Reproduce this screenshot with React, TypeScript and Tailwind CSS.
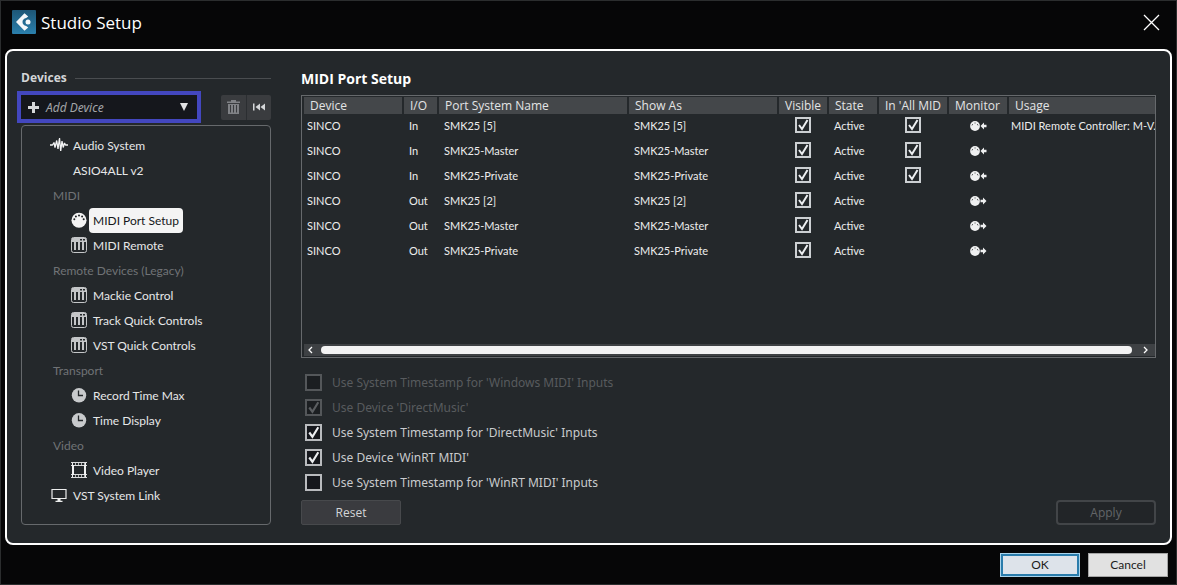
import React, { useState } from 'react';
import clsx from 'clsx';

type IconName = 'audio' | 'midi' | 'remote' | 'clock' | 'film' | 'screen';

interface TreeItem {
  label: string;
  kind: 'root' | 'group' | 'child';
  icon?: IconName;
}

interface Port {
  io: 'In' | 'Out';
  name: string;
  usage?: string;
}

interface Option {
  id: string;
  label: string;
  checked: boolean;
  disabled?: boolean;
}

const TREE: TreeItem[] = [
  { label: 'Audio System', kind: 'root', icon: 'audio' },
  { label: 'ASIO4ALL v2', kind: 'root' },
  { label: 'MIDI', kind: 'group' },
  { label: 'MIDI Port Setup', kind: 'child', icon: 'midi' },
  { label: 'MIDI Remote', kind: 'child', icon: 'remote' },
  { label: 'Remote Devices (Legacy)', kind: 'group' },
  { label: 'Mackie Control', kind: 'child', icon: 'remote' },
  { label: 'Track Quick Controls', kind: 'child', icon: 'remote' },
  { label: 'VST Quick Controls', kind: 'child', icon: 'remote' },
  { label: 'Transport', kind: 'group' },
  { label: 'Record Time Max', kind: 'child', icon: 'clock' },
  { label: 'Time Display', kind: 'child', icon: 'clock' },
  { label: 'Video', kind: 'group' },
  { label: 'Video Player', kind: 'child', icon: 'film' },
  { label: 'VST System Link', kind: 'root', icon: 'screen' },
];

const PORTS: Port[] = [
  { io: 'In', name: 'SMK25 [5]', usage: 'MIDI Remote Controller: M-V.' },
  { io: 'In', name: 'SMK25-Master' },
  { io: 'In', name: 'SMK25-Private' },
  { io: 'Out', name: 'SMK25 [2]' },
  { io: 'Out', name: 'SMK25-Master' },
  { io: 'Out', name: 'SMK25-Private' },
];

const COLUMNS = [
  { label: 'Device', width: 'w-[100px]' },
  { label: 'I/O', width: 'w-[35px]' },
  { label: 'Port System Name', width: 'w-[190px]' },
  { label: 'Show As', width: 'w-[150px]' },
  { label: 'Visible', width: 'w-[50px]' },
  { label: 'State', width: 'w-[50px]' },
  { label: "In 'All MID", width: 'w-[70px]' },
  { label: 'Monitor', width: 'w-[60px]' },
  { label: 'Usage', width: '' },
];

const OPTIONS: Option[] = [
  { id: 'ts-windows', label: "Use System Timestamp for 'Windows MIDI' Inputs", checked: false, disabled: true },
  { id: 'use-dm', label: "Use Device 'DirectMusic'", checked: true, disabled: true },
  { id: 'ts-dm', label: "Use System Timestamp for 'DirectMusic' Inputs", checked: true },
  { id: 'use-winrt', label: "Use Device 'WinRT MIDI'", checked: true },
  { id: 'ts-winrt', label: "Use System Timestamp for 'WinRT MIDI' Inputs", checked: false },
];

const TreeIcon: React.FC<{ name: IconName }> = ({ name }) => {
  switch (name) {
    case 'audio':
      return (
        <svg width="18" height="16" viewBox="0 0 18 16" className="shrink-0" fill="none" stroke="#f2f3f4" strokeWidth="1.300" aria-hidden="true">
          <path d="M0 8h2.500L4 5.500 5 10.500 6.700 3.500 8 12 9.500 1l1.200 13L12 4l1.200 6.500L14.500 6l1 2H18" strokeLinejoin="bevel" />
        </svg>
      );
    case 'midi':
      return (
        <svg width="16" height="16" viewBox="0 0 16 16" className="shrink-0" aria-hidden="true">
          <circle cx="8" cy="8.300" r="7.500" fill="#f4f4f4" />
          <g fill="#1d2023">
            <circle cx="3.300" cy="7.300" r="1" />
            <circle cx="4.900" cy="4.600" r="1" />
            <circle cx="8" cy="3.400" r="1" />
            <circle cx="11.100" cy="4.600" r="1" />
            <circle cx="12.700" cy="7.300" r="1" />
          </g>
        </svg>
      );
    case 'remote':
      return (
        <svg width="16" height="16" viewBox="0 0 16 16" className="shrink-0" aria-hidden="true">
          <rect x="0.500" y="0.500" width="15" height="15" rx="2" fill="none" stroke="#c4c6c8" />
          <path d="M1 1h14v4H1z" fill="#c4c6c8" />
          <path d="M9 2h2v1.500H9zM12 2h2v1.500h-2z" fill="#24282b" />
          <path d="M3 5h2v8H3zM7 5h2v8H7zM11 5h2v8h-2z" fill="#c4c6c8" />
        </svg>
      );
    case 'clock':
      return (
        <svg width="16" height="16" viewBox="0 0 16 16" className="shrink-0" aria-hidden="true">
          <circle cx="8" cy="8.300" r="7.200" fill="#c8cacc" />
          <path d="M7.500 3.500v5H12" fill="none" stroke="#24282b" strokeWidth="1.300" />
        </svg>
      );
    case 'film':
      return (
        <svg width="16" height="16" viewBox="0 0 16 16" className="shrink-0" fill="none" stroke="#f0f1f2" aria-hidden="true">
          <path d="M1.500 1v14M14.500 1v14M2.500 3v10M13.500 3v10" />
          <path d="M0 .5h16M0 3.500h16M0 12.500h16M0 15.500h16" strokeWidth="0.900" />
          <path d="M1 2h15M1 14h15" strokeWidth="2" strokeDasharray="1 2" strokeOpacity="0.700" />
        </svg>
      );
    case 'screen':
      return (
        <svg width="16" height="16" viewBox="0 0 16 16" className="shrink-0" aria-hidden="true">
          <path d="M1 2.500h14v9H1z" fill="none" stroke="#eceded" strokeWidth="1.200" />
          <path d="M6.500 12h3v1.700h2V15h-7v-1.300h2z" fill="#eceded" />
        </svg>
      );
  }
};

/** Small DIN socket with an arrow pointing in or out of it */
const MonitorIcon: React.FC<{ io: 'In' | 'Out' }> = ({ io }) => (
  <svg width="17" height="10" viewBox="0 0 17 10" aria-hidden="true">
    <circle cx="5" cy="5" r="4.900" fill="#eff0f1" />
    <path d="M2 4.400l.7-1.300M4.500 2h1.100M7.300 3.100l.7 1.300" stroke="#24282b" strokeWidth="0.800" />
    {io === 'In' ? (
      <path d="M10.500 5L14 1.500v2.300h2.500v2.400H14v2.300z" fill="#eff0f1" />
    ) : (
      <path d="M16.500 5L13 1.500v2.300h-2.500v2.400H13v2.300z" fill="#eff0f1" />
    )}
  </svg>
);

interface CheckBoxProps {
  id?: string;
  label?: string;
  defaultChecked: boolean;
  disabled?: boolean;
  large?: boolean;
}

const CheckBox: React.FC<CheckBoxProps> = ({ id, label, defaultChecked, disabled, large }) => {
  const [checked, setChecked] = useState(defaultChecked);

  return (
    <span className={clsx('grid shrink-0', large ? 'size-[17px]' : 'size-4')}>
      <input
        id={id}
        type="checkbox"
        checked={checked}
        disabled={disabled}
        aria-label={label}
        onChange={e => setChecked(e.target.checked)}
        className={clsx(
          'col-start-1 row-start-1 size-full appearance-none border-2',
          disabled ? 'border-[#54575a]' : large ? 'border-[#b9bbbe]' : 'border-[#cdd0d3]',
          large && !disabled && 'bg-[#15171c]',
          large && disabled && 'bg-[#1b1e21]'
        )}
      />
      {checked && (
        <svg
          viewBox="0 0 16 16"
          className={clsx('pointer-events-none col-start-1 row-start-1 size-full', disabled ? 'text-[#5b5e61]' : 'text-[#eceef0]')}
          fill="none"
          stroke="currentColor"
          strokeWidth="2"
          aria-hidden="true"
        >
          <path d="M4 8l3 4 5.500-9" />
        </svg>
      )}
    </span>
  );
};

const TitleBar: React.FC = () => (
  <header className="flex h-12 items-center justify-between pr-4 pb-1.5 pl-[11px]">
    <div className="flex items-center gap-[5px]">
      <svg width="24" height="24" viewBox="0 0 24 24" aria-hidden="true">
        <defs>
          <linearGradient id="logo-bg" x1="0" y1="0" x2="0" y2="1">
            <stop offset="0" stopColor="#1d5676" />
            <stop offset="1" stopColor="#2b80ad" />
          </linearGradient>
        </defs>
        <rect width="24" height="24" rx="1" fill="url(#logo-bg)" />
        <path d="M4 12l8.500-8.800 3.700 3.400-2 1.400c-2.400.6-3.700 2-3.700 4s1.300 3.400 3.700 4l2 1.400-3.700 3.400z" fill="#f5f8fa" />
        <circle cx="16" cy="12" r="2.500" fill="#f5f8fa" />
      </svg>
      <h1 className="pt-0.5 text-[17px] text-white">Studio Setup</h1>
    </div>
    <button type="button" aria-label="Close" className="text-white">
      <svg width="17" height="17" viewBox="0 0 17 17" stroke="currentColor" strokeWidth="1.300" aria-hidden="true">
        <path d="M1 1l15 15M16 1L1 16" />
      </svg>
    </button>
  </header>
);

const DevicePanel: React.FC = () => {
  const [selected, setSelected] = useState('MIDI Port Setup');

  return (
    <aside className="flex w-[250px] shrink-0 flex-col">
      <div className="flex h-5 items-center gap-2 pt-0.5">
        <h2 className="text-xs font-bold text-[#d3d5d7]">Devices</h2>
        <div className="h-px flex-1 bg-[#4a4d50]" />
      </div>

      <div className="-ml-1 flex items-center justify-between pt-1">
        <button
          type="button"
          aria-haspopup="menu"
          className="flex h-8 w-[184px] items-center border-4 border-[#4347bf] bg-[#15171c] pr-[9px] pl-[7px] text-xs text-[#a3a5a8]"
        >
          <svg width="11" height="11" viewBox="0 0 11 11" fill="#d5d7d9" aria-hidden="true">
            <path d="M4 0h3v4h4v3H7v4H4V7H0V4h4z" />
          </svg>
          <span className="flex-1 pt-0.5 pl-[7px] text-left font-['Noto_Sans',sans-serif] italic">Add Device</span>
          <svg width="8" height="8" viewBox="0 0 8 8" fill="#e2e3e4" aria-hidden="true">
            <path d="M0 0h8L4 8z" />
          </svg>
        </button>
        <div className="flex h-[25px] w-[50px] rounded-xs bg-[#3a3c3f]">
          <button type="button" aria-label="Remove device" className="flex flex-1 items-center justify-center border-r border-[#2b2e31]">
            <svg width="13" height="14" viewBox="0 0 13 14" fill="#808286" aria-hidden="true">
              <path d="M4 0h5v1.500h4V3H0V1.500h4zM1 4h11v10H1zM3 5v7.500h1V5zm3 0v7.500h1V5zm3 0v7.500h1V5z" fillRule="evenodd" />
            </svg>
          </button>
          <button type="button" aria-label="Reset devices" className="flex flex-1 items-center justify-center">
            <svg width="12" height="8" viewBox="0 0 12 8" fill="#d5d7d9" aria-hidden="true">
              <path d="M0 0.500h1.500v7H0zM7 0.500v7L2.500 4zM12 0.500v7L7.500 4z" />
            </svg>
          </button>
        </div>
      </div>

      <ul className="mt-0.5 flex-1 rounded-sm border border-[#66696c] pt-[7px] pb-2 font-['Lato',sans-serif] text-xs">
        {TREE.map(item =>
          item.kind === 'group' ? (
            <li key={item.label} className="flex h-[25px] items-center pl-[31px] text-[#707376]">
              {item.label}
            </li>
          ) : (
            <li key={item.label} className={clsx('flex h-[25px] items-center', item.kind === 'root' ? 'pl-7' : 'pl-12')}>
              <span className="flex w-[19px] justify-center pr-0.5 pb-0.5">{item.icon && <TreeIcon name={item.icon} />}</span>
              <button
                type="button"
                onClick={() => setSelected(item.label)}
                className={clsx(
                  'flex h-full items-center rounded-sm px-1',
                  selected === item.label ? 'bg-[#f4f4f4] text-[#15171a]' : 'text-[#e6e7e8]'
                )}
              >
                {item.label}
              </button>
            </li>
          )
        )}
      </ul>
    </aside>
  );
};

const PortTable: React.FC = () => (
  <div className="flex h-[263px] flex-col overflow-hidden border border-[#66696c] py-px pl-0.5">
    <div className="flex-1 overflow-hidden">
      <table className="w-full table-fixed border-separate border-spacing-0 text-left whitespace-nowrap">
        <thead>
          <tr>
            {COLUMNS.map(col => (
              <th
                key={col.label}
                scope="col"
                className={clsx(
                  'border-r-2 border-[#24282b] bg-[#44474a] p-0 pl-1.5 text-xs leading-[17px] font-normal text-[#e3e4e5] last:border-r-0',
                  col.width
                )}
              >
                {col.label}
              </th>
            ))}
          </tr>
        </thead>
        <tbody className="font-['Lato',sans-serif] text-[11px] text-[#eceded]">
          {PORTS.map((port, i) => (
            <tr key={i} className="h-[25px]">
              <td className="p-0 pl-[3px]">SINCO</td>
              <td className="p-0 pl-[5px]">{port.io}</td>
              <td className="p-0 pl-[5px]">{port.name}</td>
              <td className="p-0 pl-[5px]">{port.name}</td>
              <td className="p-0 pr-0.5 pb-[3px]">
                <div className="flex justify-center">
                  <CheckBox defaultChecked label={`${port.name} ${port.io} visible`} />
                </div>
              </td>
              <td className="p-0 pl-[5px]">Active</td>
              <td className="p-0 pr-0.5 pb-[3px]">
                {port.io === 'In' && (
                  <div className="flex justify-center">
                    <CheckBox defaultChecked label={`${port.name} in all MIDI inputs`} />
                  </div>
                )}
              </td>
              <td className="p-0 pr-0.5 pb-0.5">
                <div className="flex justify-center">
                  <MonitorIcon io={port.io} />
                </div>
              </td>
              <td className="p-0 pl-0.5">{port.usage}</td>
            </tr>
          ))}
        </tbody>
      </table>
    </div>

    <div className="flex h-3 items-center bg-[#3e4144] text-white">
      <button type="button" aria-label="Scroll left" className="flex w-[17px] justify-center pr-1">
        <svg width="5" height="8" viewBox="0 0 5 8" fill="none" stroke="currentColor" strokeWidth="1.300" aria-hidden="true">
          <path d="M4 1L1 4l3 3" />
        </svg>
      </button>
      <div className="h-2 flex-1 rounded-sm bg-[#f3f3f3]" />
      <button type="button" aria-label="Scroll right" className="flex w-[23px] justify-center pl-1">
        <svg width="5" height="8" viewBox="0 0 5 8" fill="none" stroke="currentColor" strokeWidth="1.300" aria-hidden="true">
          <path d="M1 1l3 3-3 3" />
        </svg>
      </button>
    </div>
  </div>
);

const PortSetup: React.FC = () => (
  <main className="flex min-w-0 flex-1 flex-col">
    <h2 className="flex h-7 items-center pb-[5px] text-sm font-bold text-white">MIDI Port Setup</h2>
    <PortTable />

    <div className="mt-3 pl-1 font-['Noto_Sans',sans-serif] text-xs">
      {OPTIONS.map(opt => (
        <div key={opt.id} className="flex h-[25px] items-center gap-2.5">
          <CheckBox id={opt.id} defaultChecked={opt.checked} disabled={opt.disabled} large />
          <label htmlFor={opt.id} className={opt.disabled ? 'text-[#585b5e]' : 'text-[#c9cbcd]'}>
            {opt.label}
          </label>
        </div>
      ))}
    </div>

    <div className="mt-auto flex justify-between text-xs">
      <button type="button" className="h-[25px] w-[100px] rounded-xs border border-[#47494c] bg-[#3a3b3f] text-[#d3d5d7]">
        Reset
      </button>
      <button type="button" disabled className="h-[25px] w-[100px] rounded-sm border-2 border-[#424548] bg-[#222528] text-[#626568]">
        Apply
      </button>
    </div>
  </main>
);

export default function App() {
  return (
    <div className="flex min-h-screen flex-col border border-[#2b2d2e] bg-[#060607] font-['Open_Sans',sans-serif]">
      <TitleBar />
      <div className="mx-1 flex flex-1 gap-[30px] rounded-lg border-2 border-white bg-[#24282b] px-3.5 pt-4 pb-[18px]">
        <DevicePanel />
        <PortSetup />
      </div>
      <footer className="flex justify-end gap-2 px-2 pt-2 pb-[7px] font-['Lato',sans-serif] text-xs text-[#1c1c1c]">
        <button type="button" className="h-6 w-20 border border-[#a9d3ea] bg-[#dde3ea] outline-2 -outline-offset-3 outline-[#2a7cab]">
          OK
        </button>
        <button type="button" className="h-6 w-20 border border-[#a5a5a5] bg-[#e1e1e1]">
          Cancel
        </button>
      </footer>
    </div>
  );
}
